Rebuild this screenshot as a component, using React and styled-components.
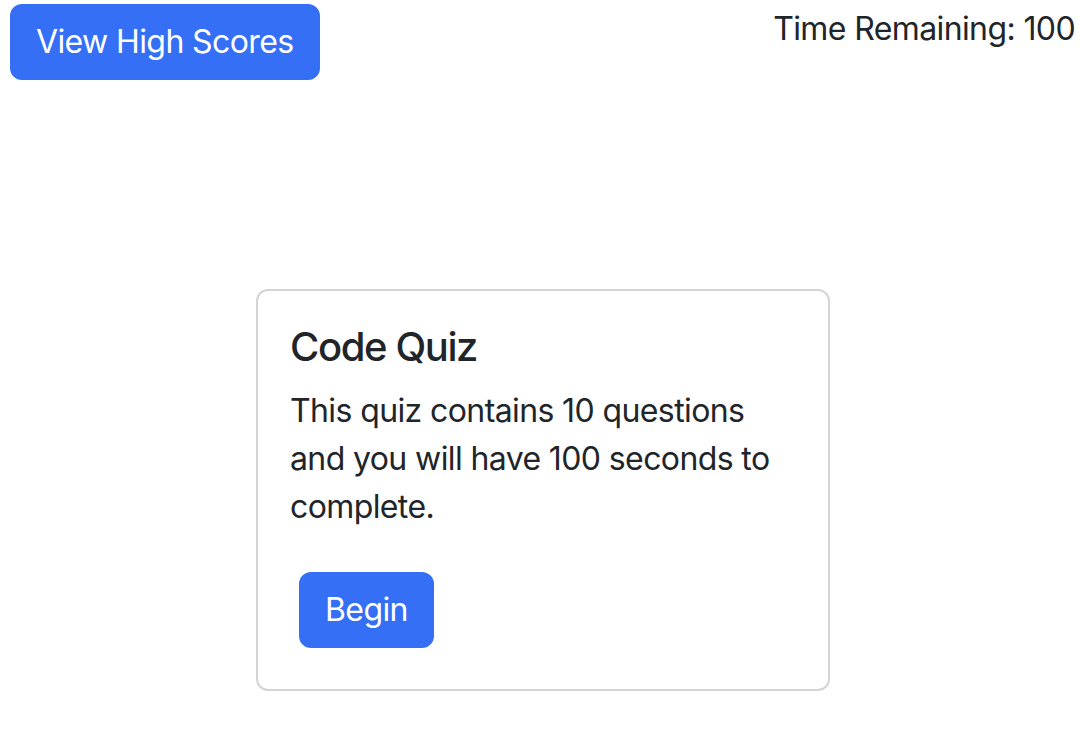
import styled, { createGlobalStyle } from "styled-components";

const GlobalStyle = createGlobalStyle`
  body {
    margin: 0;
    background: #fff;
    color: #212529;
    font-family: Inter, "Noto Sans", sans-serif;
    letter-spacing: -0.038em;
  }
`;

const Page = styled.div`
  width: 1080px;
  height: 752px;
  overflow: hidden;
`;

const Header = styled.header`
  display: flex;
  justify-content: space-between;
  align-items: flex-start;
  padding: 4px 5px 0 10px;
`;

const Timer = styled.div`
  font-size: 32px;
  line-height: 48px;
  margin-top: 1px;
`;

const Button = styled.button`
  background: #346ff5;
  color: #fff;
  border: 2px solid #346ff5;
  border-radius: 12px;
  font-family: inherit;
  letter-spacing: inherit;
  font-size: 32px;
  line-height: 48px;
  padding: 12px 24px;
  margin: ${(p) => p.$margin || "0"};
  cursor: pointer;
`;

const Main = styled.main`
  display: flex;
  justify-content: center;
  padding: 209px 0 0 6px;
`;

const Card = styled.section`
  width: 574px;
  box-sizing: border-box;
  border: 2px solid #d4d4d4;
  border-radius: 12px;
  padding: 32px;
`;

const Title = styled.h5`
  margin: 0 0 16px;
  font-size: 40px;
  line-height: 48px;
  font-weight: 500;
  letter-spacing: -0.035em;
`;

const Text = styled.p`
  margin: 0 0 32px;
  font-size: 32px;
  line-height: 48px;
`;

export default function App() {
  return (
    <Page>
      <GlobalStyle />
      <Header>
        <Button>View High Scores</Button>
        <Timer>Time Remaining: 100</Timer>
      </Header>
      <Main>
        <Card>
          <Title>Code Quiz</Title>
          <Text>
            This quiz contains 10 questions and you will have 100 seconds to
            complete.
          </Text>
          <Button $margin="9px">Begin</Button>
        </Card>
      </Main>
    </Page>
  );
}
